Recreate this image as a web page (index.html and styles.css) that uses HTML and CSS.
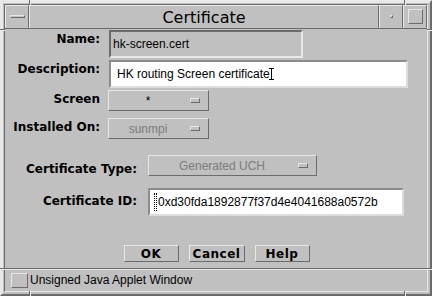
FILE: index.html
```html
<!DOCTYPE html>
<html lang="en">
<head>
    <meta charset="UTF-8">
    <title>Certificate</title>
    <link rel="stylesheet" href="styles.css">
</head>
<body>
    <div class="window">
        <!-- resize handle marks on the frame -->
        <span class="tick tick-v tick-top-l"></span>
        <span class="tick tick-v tick-top-r"></span>
        <span class="tick tick-v tick-bot-l"></span>
        <span class="tick tick-v tick-bot-r"></span>
        <span class="tick tick-h tick-left-t"></span>
        <span class="tick tick-h tick-right-t"></span>
        <span class="tick tick-h tick-left-b"></span>
        <span class="tick tick-h tick-right-b"></span>

        <div class="frame">
            <div class="titlebar">
                <div class="tb-btn tb-menu"><span class="menu-bar"></span></div>
                <div class="tb-title">Certificate</div>
                <div class="tb-btn tb-min"><span class="min-dot"></span></div>
                <div class="tb-btn tb-max"><span class="max-box"></span></div>
            </div>

            <div class="client">
                <div class="form">
                    <div class="grid grid-top">
                        <label class="lbl">Name:</label>
                        <div class="field field-ro">hk-screen.cert</div>

                        <label class="lbl">Description:</label>
                        <div class="field field-edit field-desc">HK routing Screen certificate<span class="ibeam"></span></div>

                        <label class="lbl">Screen</label>
                        <div class="choice choice-small">
                            <span class="choice-text">*</span>
                            <span class="choice-ind"></span>
                        </div>

                        <label class="lbl">Installed On:</label>
                        <div class="choice choice-small">
                            <span class="choice-text disabled">sunmpi</span>
                            <span class="choice-ind"></span>
                        </div>
                    </div>

                    <div class="grid grid-cert">
                        <label class="lbl lbl-type">Certificate Type:</label>
                        <div class="choice choice-wide">
                            <span class="choice-text disabled">Generated UCH</span>
                            <span class="choice-ind"></span>
                        </div>

                        <label class="lbl lbl-id">Certificate ID:</label>
                        <div class="field field-edit field-id"><span class="focus-caret"></span>0xd30fda1892877f37d4e4041688a0572b</div>
                    </div>

                    <div class="buttons">
                        <button class="btn btn-ok">OK</button>
                        <button class="btn btn-cancel">Cancel</button>
                        <button class="btn btn-help">Help</button>
                    </div>
                </div>

                <div class="status">
                    <span class="status-icon"></span>
                    <span class="status-text">Unsigned Java Applet Window</span>
                </div>
            </div>
        </div>
    </div>
</body>
</html>
```

FILE: styles.css
```css
:root {
    --bg: #c0c0c0;
    --light: #e8e8e8;
    --dark: #6b6b6b;
    --text: #000000;
}

* {
    box-sizing: border-box;
}

body {
    margin: 0;
    background-color: var(--bg);
}

.window {
    position: relative;
    width: 432px;
    height: 296px;
    background-color: var(--bg);
    border: 2px solid;
    border-color: var(--light) var(--dark) var(--dark) var(--light);
    box-shadow: inset 1px 1px 0 var(--light);
    padding: 2px;
    display: flex;
    flex-direction: column;
}

/* resize handle marks */
.tick {
    position: absolute;
}

.tick-v {
    width: 2px;
    height: 5px;
    margin: -2px 0;
    border-left: 1px solid var(--dark);
    border-right: 1px solid var(--light);
}

.tick-h {
    width: 5px;
    height: 2px;
    margin: 0 -2px;
    border-top: 1px solid var(--dark);
    border-bottom: 1px solid var(--light);
}

.tick-top-l { left: 27px; top: 0; }
.tick-top-r { left: 402px; top: 0; }
.tick-bot-l { left: 27px; bottom: 0; }
.tick-bot-r { left: 402px; bottom: 0; }
.tick-left-t { left: 0; top: 27px; }
.tick-right-t { right: 0; top: 27px; }
.tick-left-b { left: 0; top: 266px; }
.tick-right-b { right: 0; top: 266px; }

.frame {
    flex: 1;
    display: flex;
    flex-direction: column;
    border: 1px solid;
    border-color: var(--dark) var(--light) var(--light) var(--dark);
}

/* title bar */
.titlebar {
    display: flex;
    height: 24px;
    border-bottom: 1px solid var(--dark);
}

.tb-btn,
.tb-title {
    border: 1px solid;
    border-color: var(--light) var(--dark) var(--bg) var(--light);
}

.tb-btn {
    width: 24px;
    display: flex;
    align-items: center;
    justify-content: center;
}

.tb-title {
    flex: 1;
    text-align: center;
    font-family: "DejaVu Sans", sans-serif;
    font-size: 16px;
    line-height: 22px;
    padding-top: 1px;
    color: var(--text);
}

.menu-bar {
    width: 15px;
    height: 3px;
    border: 1px solid;
    border-color: var(--light) var(--dark) var(--dark) var(--light);
}

.min-dot {
    width: 3px;
    height: 3px;
    border: 1px solid;
    border-color: var(--light) var(--dark) var(--dark) var(--light);
}

.max-box {
    width: 15px;
    height: 15px;
    border: 1px solid;
    border-color: var(--light) var(--dark) var(--dark) var(--light);
}

/* client area */
.client {
    flex: 1;
    display: flex;
    flex-direction: column;
}

.form {
    flex: 1;
    padding-top: 1px;
}

.grid {
    display: grid;
    justify-items: start;
}

.grid-top {
    grid-template-columns: 95px auto;
    grid-template-rows: 28px 28px 26px 21px;
    column-gap: 8px;
    row-gap: 2px;
}

.grid-cert {
    grid-template-columns: 132px auto;
    grid-template-rows: 21px 28px;
    column-gap: 11px;
    row-gap: 12px;
    margin-top: 16px;
}

.lbl {
    justify-self: end;
    font-family: "DejaVu Sans", sans-serif;
    font-weight: bold;
    font-size: 12px;
    line-height: 14px;
    padding-top: 2px;
    color: var(--text);
}

.lbl-type {
    padding-top: 7px;
}

.lbl-id {
    padding-top: 6px;
}

.field {
    height: 28px;
    border: 2px solid;
    font-family: "Liberation Sans", Arial, sans-serif;
    font-size: 12px;
    line-height: 24px;
    white-space: nowrap;
    color: var(--text);
}

.field-ro {
    width: 194px;
    margin-left: 1px;
    padding-left: 2px;
    background-color: var(--bg);
    border-color: var(--dark) var(--light) var(--light) var(--dark);
}

.field-edit {
    background-color: #ffffff;
    border-color: #8c8c8c #dcdcdc #dcdcdc #8c8c8c;
}

.field-desc {
    width: 299px;
    margin-left: 1px;
    padding-left: 6px;
}

.field-id {
    width: 256px;
    padding-left: 4px;
    display: flex;
    align-items: center;
}

.ibeam {
    display: inline-block;
    vertical-align: -2px;
    width: 5px;
    height: 12px;
    margin-left: -1px;
    border-top: 1px solid #000;
    border-bottom: 1px solid #000;
    background: linear-gradient(#000, #000) center / 1px 100% no-repeat;
}

.focus-caret {
    width: 3px;
    height: 18px;
    margin-right: 1px;
    border: 1px dotted #000;
}

/* option menus */
.choice {
    height: 21px;
    display: flex;
    align-items: center;
    border: 1px solid;
    border-color: var(--light) var(--dark) var(--dark) var(--light);
    font-family: "Liberation Sans", Arial, sans-serif;
    font-size: 12px;
    color: var(--text);
}

.choice-small {
    width: 101px;
}

.choice-wide {
    width: 169px;
}

.choice-text {
    flex: 1;
    text-align: center;
    padding-left: 1px;
}

.choice-text.disabled {
    color: #7c7c7c;
}

.choice-ind {
    width: 10px;
    height: 5px;
    margin: 0 8px 0 4px;
    border: 1px solid;
    border-color: var(--light) var(--dark) var(--dark) var(--light);
}

/* push buttons */
.buttons {
    display: flex;
    justify-content: center;
    gap: 10px;
    margin-top: 29px;
    padding-left: 1px;
}

.btn {
    height: 17px;
    padding: 0;
    background-color: var(--bg);
    border: 1px solid;
    border-color: var(--light) var(--dark) var(--dark) var(--light);
    font-family: "DejaVu Sans", sans-serif;
    font-weight: bold;
    font-size: 12px;
    line-height: 14px;
    letter-spacing: 0.5px;
    color: var(--text);
}

.btn-ok {
    width: 55px;
}

.btn-cancel {
    width: 56px;
}

.btn-help {
    width: 55px;
}

/* warning strip */
.status {
    height: 23px;
    display: flex;
    align-items: center;
    gap: 2px;
    padding-left: 6px;
    border-top: 1px solid var(--dark);
    box-shadow: inset 0 1px 0 var(--light);
}

.status-icon {
    width: 17px;
    height: 15px;
    border: 1px solid;
    border-color: var(--light) var(--dark) var(--dark) var(--light);
}

.status-text {
    font-family: "Liberation Sans", Arial, sans-serif;
    font-size: 12px;
    color: var(--text);
}
```
